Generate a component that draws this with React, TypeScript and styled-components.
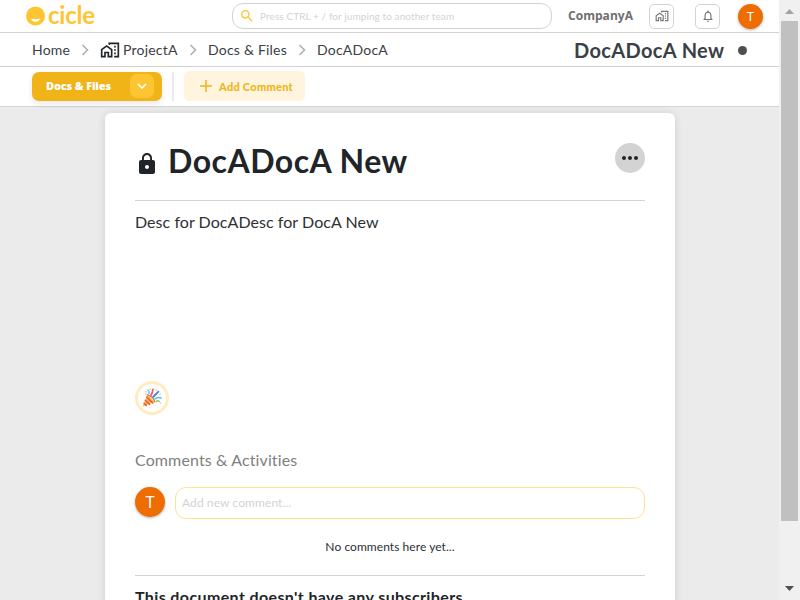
import React from "react";
import styled, { createGlobalStyle } from "styled-components";
import { MdOutlineHomeWork, MdLock, MdNotificationsNone, MdMoreHoriz, MdSearch } from "react-icons/md";

const GlobalStyle = createGlobalStyle`
  * { box-sizing: border-box; }
  body {
    margin: 0;
    overflow: hidden;
    font-family: Lato, "Open Sans", sans-serif;
    font-variant-ligatures: none;
    color: #212529;
  }
  h1, h2, h3, p { margin: 0; font-weight: 400; }
  svg { display: block; flex: none; }
`;

const Window = styled.div`
  display: flex;
  width: 800px;
  height: 600px;
  overflow: hidden;
  background: #ebebeb;
`;

const Page = styled.div`
  display: flex;
  flex-direction: column;
  width: 779px;
  height: 600px;
  overflow: hidden;
`;

const Header = styled.header`
  display: flex;
  flex: none;
  align-items: center;
  height: 33px;
  padding: 0 16px 0 26px;
  background: #fff;
  border-bottom: 1px solid #d3d3d3;
`;

const Brand = styled.div`
  display: flex;
  align-items: center;
  gap: 3px;
  width: 206px;
  height: 32px;
  color: #fdc532;
`;

const BrandName = styled.span`
  margin-top: -2px;
  font-size: 24px;
  line-height: 30px;
  font-weight: 700;
  letter-spacing: -0.25px;
`;

const Search = styled.div`
  display: flex;
  align-items: center;
  gap: 5px;
  width: 320px;
  height: 26px;
  padding-left: 6px;
  border: 1px solid #d3d3d3;
  border-radius: 11px;
  color: #fdc532;
`;

const Placeholder = styled.span<{ $size: number }>`
  margin-top: -1px;
  font-size: ${(p) => p.$size}px;
  letter-spacing: 0.09px;
  color: #d3d3d3;
  white-space: nowrap;
`;

const Company = styled.span`
  width: 81px;
  margin-left: 16px;
  font: 700 12px/16px "Open Sans", sans-serif;
  letter-spacing: 0.04px;
  color: #6f6f6f;
`;

const IconButton = styled.span`
  display: flex;
  align-items: center;
  justify-content: center;
  width: 25px;
  height: 25px;
  margin-right: 21px;
  border: 1px solid #d3d3d3;
  border-radius: 5px;
  color: #777;
`;

const Avatar = styled.span<{ $size: number }>`
  display: flex;
  flex: none;
  align-items: center;
  justify-content: center;
  width: ${(p) => p.$size}px;
  height: ${(p) => p.$size}px;
  margin-left: ${(p) => (p.$size === 25 ? -3 : 0)}px;
  border-radius: 50%;
  background: #ef6c00;
  color: #fff;
  font-family: Roboto, sans-serif;
  font-size: ${(p) => (p.$size === 25 ? 13 : 16)}px;
  box-shadow: 0 1px 3px rgba(0, 0, 0, 0.3);
`;

const Trail = styled.nav`
  display: flex;
  flex: none;
  align-items: center;
  height: 34px;
  padding: 0 32px;
  background: #fff;
  border-bottom: 1px solid #d3d3d3;
`;

const Crumb = styled.span<{ $width: number }>`
  flex: none;
  width: ${(p) => p.$width}px;
  font-size: 14px;
  line-height: 20px;
  letter-spacing: 0.22px;
  color: #3a4045;
  white-space: nowrap;
`;

const CrumbArrow = styled.svg`
  width: 8px;
  height: 12px;
  margin: 1px 11px 0 10px;
  fill: none;
  stroke: #b0b0b0;
  stroke-width: 1.6;
`;

const ProjectIcon = styled(MdOutlineHomeWork)`
  margin: 1px 3px 0 0;
`;

const TrailTitle = styled.h2`
  width: 150px;
  margin-left: auto;
  font-size: 20px;
  line-height: 26px;
  font-weight: 700;
  letter-spacing: 0.36px;
  color: #3a4046;
  white-space: nowrap;
`;

const Dot = styled.span`
  width: 9px;
  height: 9px;
  margin: 2px 0 0 14px;
  border-radius: 50%;
  background: #4f4f4f;
`;

const Toolbar = styled.div`
  display: flex;
  flex: none;
  align-items: center;
  height: 40px;
  padding: 0 32px 1px;
  background: #fff;
  border-bottom: 1px solid #d3d6d6;
`;

const SectionButton = styled.div`
  display: flex;
  align-items: center;
  justify-content: space-between;
  width: 130px;
  height: 29px;
  padding: 0 8px 0 14px;
  border-radius: 7px;
  background: #f0b418;
  color: #fff;
  font: 800 11px/16px "Open Sans", sans-serif;
  letter-spacing: -0.15px;
  box-shadow: 0 3px 6px rgba(0, 0, 0, 0.09);
`;

const Dropdown = styled.span`
  display: flex;
  align-items: center;
  justify-content: center;
  width: 24px;
  height: 24px;
  border-radius: 7px;
  background: #fdc532;
`;

const Separator = styled.span`
  width: 2px;
  height: 29px;
  margin: 0 10px;
  background: #ebebeb;
`;

const AddButton = styled.div`
  display: flex;
  align-items: center;
  gap: 7px;
  width: 121px;
  height: 30px;
  padding-left: 16px;
  border-radius: 5px;
  background: #fff5df;
  color: #f0b418;
  font-size: 11px;
  font-weight: 900;
  letter-spacing: 0.27px;
  white-space: nowrap;
`;

const Card = styled.main`
  flex: none;
  width: 570px;
  height: 520px;
  margin: 6px 0 0 105px;
  padding: 30px 30px 0;
  border-radius: 6px;
  background: #fff;
  box-shadow: 0 1px 8px rgba(0, 0, 0, 0.13);
`;

const TitleRow = styled.div`
  display: flex;
  align-items: flex-start;
  height: 58px;
  border-bottom: 1px solid #d3d3d3;
`;

const LockIcon = styled(MdLock)`
  margin-top: 9px;
`;

const Title = styled.h1`
  flex: 1;
  margin: -2px 0 0 9px;
  font-size: 32px;
  line-height: 40px;
  font-weight: 700;
  letter-spacing: 0.5px;
  white-space: nowrap;
`;

const MoreButton = styled.span`
  display: flex;
  align-items: center;
  justify-content: center;
  width: 30px;
  height: 30px;
  border-radius: 50%;
  background: #d3d3d3;
`;

const Description = styled.p`
  height: 180px;
  padding-top: 9px;
  font-size: 16px;
  line-height: 24px;
  letter-spacing: 0.05px;
  color: #2c3034;
`;

const Reaction = styled.div`
  display: flex;
  align-items: center;
  justify-content: center;
  width: 34px;
  height: 34px;
  border: 3px solid #ffecc0;
  border-radius: 50%;
`;

const CommentsHeading = styled.h2`
  margin: 33px 0 15px;
  font-size: 16px;
  line-height: 24px;
  letter-spacing: 0.12px;
  color: #808080;
`;

const CommentRow = styled.div`
  display: flex;
  gap: 10px;
  height: 32px;
`;

const CommentInput = styled.div`
  display: flex;
  flex: 1;
  align-items: center;
  padding-left: 6px;
  border: 1px solid #ffe294;
  border-radius: 11px;
`;

const Empty = styled.p`
  height: 57px;
  padding-top: 19px;
  border-bottom: 1px solid #d3d3d3;
  font-size: 12px;
  line-height: 18px;
  letter-spacing: 0.06px;
  text-align: center;
  color: #2c3034;
`;

const Subscribers = styled.h3`
  padding-top: 9px;
  font-size: 16px;
  line-height: 24px;
  font-weight: 700;
  letter-spacing: 0.38px;
  white-space: nowrap;
`;

const Scrollbar = styled.div`
  display: flex;
  flex-direction: column;
  align-items: center;
  width: 21px;
  height: 600px;
  padding: 9px 0 0;
  background: #f0f0f0;
`;

const Thumb = styled.div`
  flex: none;
  width: 17px;
  height: 500px;
  margin: 7px 0 65px;
  background: #c0c0c0;
`;

const Smile = () => (
  <svg width="19" height="20" viewBox="0 0 19 20">
    <circle cx="9.5" cy="10" r="9.5" fill="#fdc532" />
    <path d="M5 12.5q4.5 1.5 9.2 0q-1 3.2-4.6 3.2T5 12.5z" fill="#fff" />
  </svg>
);

const Arrow = () => (
  <CrumbArrow viewBox="0 0 8 12">
    <path d="M1.5 1 6.5 6l-5 5" />
  </CrumbArrow>
);

const Popper = () => (
  <svg width="20" height="20" viewBox="0 0 20 20" fill="none" strokeLinecap="round">
    <path d="M5.4 6.8 12.8 14 .6 18.4z" fill="#fbb83f" />
    <path d="m4.6 9 6.2 6M3.3 12.2l4.3 4.2M2 15.2l2.3 2.2" stroke="#e85b54" strokeWidth="1.5" />
    <path d="M5.4 6.8q3 .6 5.2 3.1t2.2 4.1" stroke="#df704b" strokeWidth="1.2" />
    <path d="M6.8 5.8q1.2-2-1-3.8" stroke="#72c8ef" strokeWidth="1.5" />
    <path d="M9 7.2q1.5-2.6 2-5.8" stroke="#ef6259" strokeWidth="1.8" />
    <path d="m11.2 9 5.2-5.3" stroke="#4e83d1" strokeWidth="1.8" />
    <path d="M13 11q2.8-2.4 6-1" stroke="#54b9ec" strokeWidth="1.6" />
    <path d="M14.3 13.3q1.8-1.2 3 .2" stroke="#9bcd57" strokeWidth="1.6" />
    <path d="M4 3.8h.1M8 1.3h.1M18 6.2h.1" stroke="#9bcd57" strokeWidth="1.3" />
    <path d="M14 2h.1M18.5 15h.1M4 6h.1" stroke="#f3a6bc" strokeWidth="1.4" />
  </svg>
);

export default function App() {
  return (
    <>
      <GlobalStyle />
      <Window>
        <Page>
          <Header>
            <Brand>
              <Smile />
              <BrandName>cicle</BrandName>
            </Brand>
            <Search>
              <MdSearch size={16} />
              <Placeholder $size={10}>Press CTRL + / for jumping to another team</Placeholder>
            </Search>
            <Company>CompanyA</Company>
            <IconButton>
              <MdOutlineHomeWork size={14} />
            </IconButton>
            <IconButton>
              <MdNotificationsNone size={14} />
            </IconButton>
            <Avatar $size={25}>T</Avatar>
          </Header>
          <Trail>
            <Crumb $width={39}>Home</Crumb>
            <Arrow />
            <ProjectIcon size={20} />
            <Crumb $width={56}>ProjectA</Crumb>
            <Arrow />
            <Crumb $width={80}>Docs &amp; Files</Crumb>
            <Arrow />
            <Crumb $width={72}>DocADocA</Crumb>
            <TrailTitle>DocADocA New</TrailTitle>
            <Dot />
          </Trail>
          <Toolbar>
            <SectionButton>
              Docs &amp; Files
              <Dropdown>
                <svg width="10" height="7" viewBox="0 0 10 7">
                  <path d="m1 1 4 4 4-4" fill="none" stroke="#fff" strokeWidth="1.7" />
                </svg>
              </Dropdown>
            </SectionButton>
            <Separator />
            <AddButton>
              <svg width="12" height="12" viewBox="0 0 12 12">
                <path d="M6 0v12M0 6h12" stroke="#f0b418" strokeWidth="1.5" />
              </svg>
              Add Comment
            </AddButton>
          </Toolbar>
          <Card>
            <TitleRow>
              <LockIcon size={24} />
              <Title>DocADocA New</Title>
              <MoreButton>
                <MdMoreHoriz size={24} />
              </MoreButton>
            </TitleRow>
            <Description>Desc for DocADesc for DocA New</Description>
            <Reaction>
              <Popper />
            </Reaction>
            <CommentsHeading>Comments &amp; Activities</CommentsHeading>
            <CommentRow>
              <Avatar $size={30}>T</Avatar>
              <CommentInput>
                <Placeholder $size={12}>Add new comment...</Placeholder>
              </CommentInput>
            </CommentRow>
            <Empty>No comments here yet...</Empty>
            <Subscribers>This document doesn&apos;t have any subscribers.</Subscribers>
          </Card>
        </Page>
        <Scrollbar>
          <svg width="9" height="5" viewBox="0 0 9 5">
            <path d="M0 5 4.5 0 9 5z" fill="#a3a3a3" />
          </svg>
          <Thumb />
          <svg width="9" height="5" viewBox="0 0 9 5">
            <path d="M0 0 4.5 5 9 0z" fill="#505050" />
          </svg>
        </Scrollbar>
      </Window>
    </>
  );
}
